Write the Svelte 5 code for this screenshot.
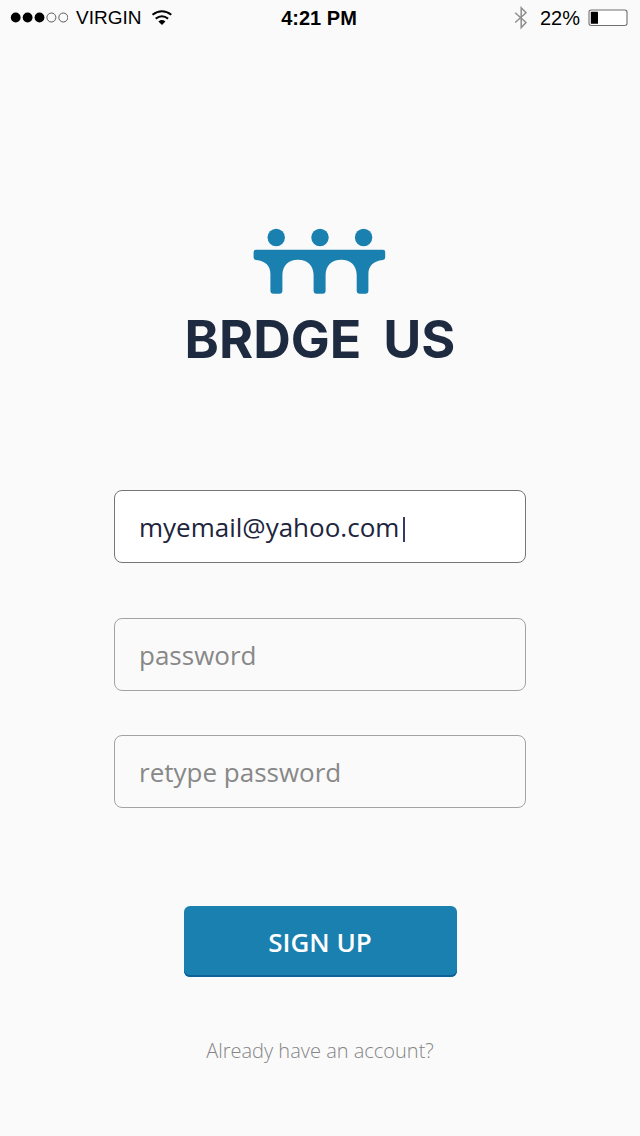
<script>
  let email = $state('myemail@yahoo.com');
  let password = $state('');
  let confirmation = $state('');
  const signal = [true, true, true, false, false];
</script>

<div class="screen">
  <header class="status">
    <div class="side">
      <svg class="dots" width="58" height="12" viewBox="0 0 58 12" aria-hidden="true">
        {#each signal as on, i}
          <circle cx={5.7 + i * 11.9} cy="5.5" r={on ? 4.9 : 4.5} fill={on ? '#000' : 'none'} stroke={on ? 'none' : '#333'} stroke-width="0.8" />
        {/each}
      </svg>
      <span class="carrier">VIRGIN</span>
      <svg class="wifi" width="22" height="16" viewBox="0 0 22 16" aria-hidden="true">
        <g fill="none" stroke="#000" stroke-width="2">
          <path d="M1.5 4.7 Q11 -2.3 20.3 4.7" />
          <path d="M4.7 8.6 Q11 3.8 17.1 8.6" />
        </g>
        <path d="M7.4 11.4 Q11 8.6 14.4 11.4 L11 15 Z" />
      </svg>
    </div>
    <time class="clock">4:21 PM</time>
    <div class="side end">
      <svg class="bluetooth" width="14" height="24" viewBox="0 0 14 24" aria-hidden="true">
        <path d="M1.2 6.8 L12 16.5 L7.2 21.6 V1.8 L12 6.8 L1.2 16.5" fill="none" stroke="#8e8e8e" stroke-width="1.5" />
      </svg>
      <span class="charge">22%</span>
      <svg width="40" height="18" viewBox="0 0 40 18" aria-hidden="true">
        <rect x="1" y="1" width="38" height="15.5" rx="2.2" fill="#fff" stroke="#707070" stroke-width="1.1" />
        <rect x="2.8" y="2.8" width="7.2" height="12" rx="0.6" />
      </svg>
    </div>
  </header>

  <main>
    <div class="brand">
      <svg width="134" height="68" viewBox="0 0 134 68" fill="#1a80b0" aria-hidden="true">
        <circle cx="23.2" cy="9.5" r="8.7" />
        <circle cx="67" cy="9.5" r="8.7" />
        <circle cx="110.6" cy="9.5" r="8.7" />
        <path d="M3 21.7 H130 Q132.2 21.7 132.2 24 V29.5 Q132.2 31.9 129.8 32.1 C120.5 33 115.4 38 115.4 46 V62.8 Q115.4 65.8 112.4 65.8 H106.7 Q103.7 65.8 103.7 62.8 V47 C103.7 37.5 97.5 31.7 88.2 31.7 S72.6 37.5 72.6 47 V62.8 Q72.6 65.8 69.6 65.8 H63.6 Q60.6 65.8 60.6 62.8 V47 C60.6 37.5 54.3 31.7 45 31.7 S29.4 37.5 29.4 47 V62.8 Q29.4 65.8 26.4 65.8 H20.4 Q17.4 65.8 17.4 62.8 V46 C17.4 38 12.5 33 3.2 32.1 Q.6 31.9 .6 29.5 V24 Q.6 21.7 3 21.7 Z" />
      </svg>
      <h1><span>BRDGE</span> <span>US</span></h1>
    </div>

    <form onsubmit={(event) => event.preventDefault()}>
      <label class="field active">
        <input type="email" aria-label="Email" bind:value={email} />
        <span class="caret" aria-hidden="true"></span>
      </label>
      <label class="field first">
        <input type="password" aria-label="Password" placeholder="password" bind:value={password} />
      </label>
      <label class="field">
        <input type="password" aria-label="Retype password" placeholder="retype password" bind:value={confirmation} />
      </label>
      <button type="submit">SIGN UP</button>
    </form>
    <a href="#login">Already have an account?</a>
  </main>
</div>

<style>
  :global(body) {
    margin: 0;
    background: #fafafa;
  }
  .screen {
    min-height: 100vh;
    font-family: "Open Sans", sans-serif;
    background: #fafafa;
  }
  .status {
    display: grid;
    grid-template-columns: 1fr auto 1fr;
    align-items: center;
    height: 36px;
    padding: 0 12px 0 10px;
    font: 20px/24px "Liberation Sans", Arial, sans-serif;
    color: #000;
  }
  .side {
    display: flex;
    align-items: center;
    gap: 8px;
  }
  .end {
    justify-content: flex-end;
  }
  .carrier {
    margin-right: 2px;
    font-size: 19px;
  }
  .bluetooth {
    margin-right: 4px;
  }
  .clock {
    font-weight: 700;
  }
  main {
    display: flex;
    flex-direction: column;
    align-items: center;
    padding: 192px 24px 48px;
  }
  .brand {
    display: flex;
    flex-direction: column;
    align-items: center;
    gap: 16px;
  }
  .brand svg {
    display: block;
  }
  h1 {
    display: flex;
    gap: 22px;
    margin: 0;
    font: 700 52px/56px Inter, sans-serif;
    color: #1d2a3f;
  }
  form {
    display: flex;
    flex-direction: column;
    align-items: center;
    gap: 44px;
    width: 100%;
    max-width: 412px;
    margin-top: 122px;
  }
  .field {
    box-sizing: border-box;
    display: flex;
    align-items: center;
    width: 100%;
    height: 73px;
    padding: 0 24px;
    border: 1px solid #a3a3a3;
    border-radius: 8px;
  }
  .active {
    border-color: #747578;
    background: #fff;
  }
  .first {
    margin-top: 11px;
  }
  input {
    flex: 1;
    min-width: 0;
    margin: 0;
    padding: 0;
    border: 0;
    outline: 0;
    background: transparent;
    font: 400 26px/36px "Open Sans", sans-serif;
    color: #20243c;
  }
  input::placeholder {
    color: #888;
    opacity: 1;
  }
  .active input {
    flex: 0 1 auto;
    field-sizing: content;
  }
  .caret {
    width: 2px;
    height: 25px;
    margin: 6px 0 0 4px;
    background: #343b62;
  }
  button {
    width: 273px;
    max-width: 100%;
    height: 71px;
    margin-top: 54px;
    padding: 0;
    border: 0;
    border-radius: 6px;
    background: #1a80b0;
    box-shadow: inset 0 -2px #0d629b;
    font: 600 26px/32px "Open Sans", sans-serif;
    color: #fff;
    cursor: pointer;
  }
  a {
    margin-top: 60px;
    font-size: 20px;
    line-height: 28px;
    font-weight: 300;
    color: #858585;
    text-decoration: none;
  }
</style>
